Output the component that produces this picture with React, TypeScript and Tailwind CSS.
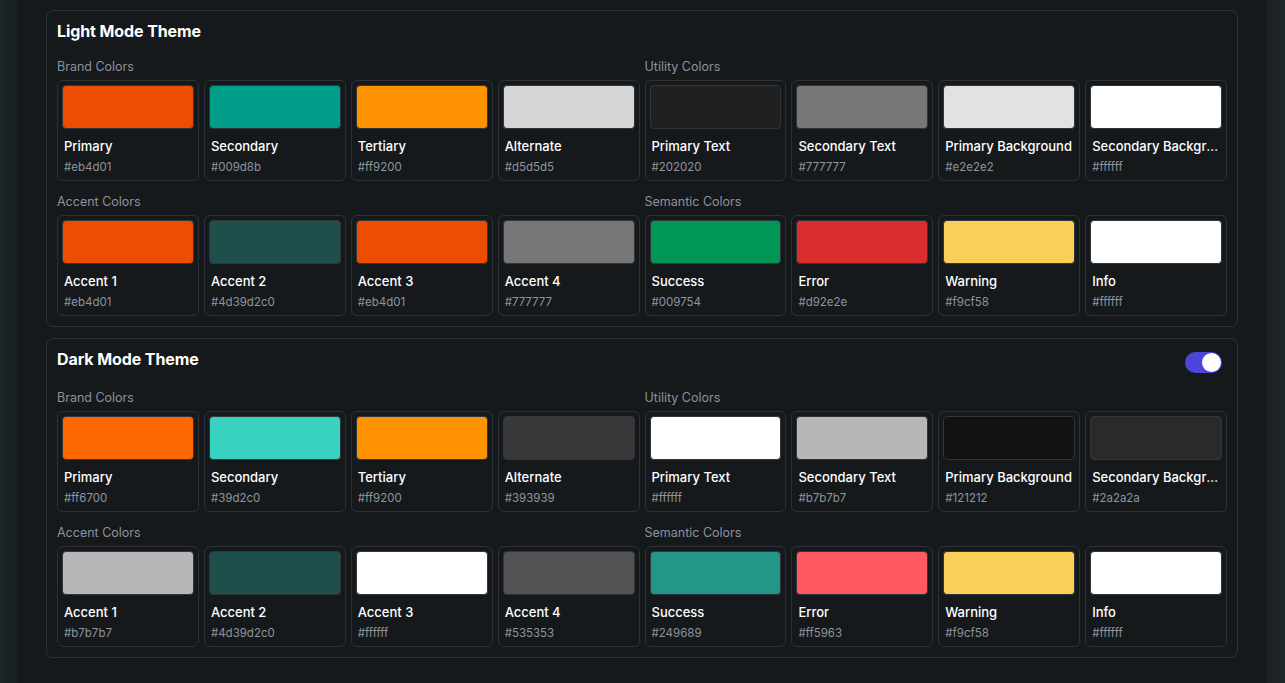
const lightTheme = {
  brand: [
    { name: "Primary", hex: "#eb4d01" },
    { name: "Secondary", hex: "#009d8b" },
    { name: "Tertiary", hex: "#ff9200" },
    { name: "Alternate", hex: "#d5d5d5" },
  ],
  utility: [
    { name: "Primary Text", hex: "#202020" },
    { name: "Secondary Text", hex: "#777777" },
    { name: "Primary Background", hex: "#e2e2e2" },
    { name: "Secondary Background", hex: "#ffffff" },
  ],
  accent: [
    { name: "Accent 1", hex: "#eb4d01" },
    { name: "Accent 2", hex: "#4d39d2c0", swatch: "#1f4f4a" },
    { name: "Accent 3", hex: "#eb4d01" },
    { name: "Accent 4", hex: "#777777" },
  ],
  semantic: [
    { name: "Success", hex: "#009754" },
    { name: "Error", hex: "#d92e2e" },
    { name: "Warning", hex: "#f9cf58" },
    { name: "Info", hex: "#ffffff" },
  ],
};

const darkTheme = {
  brand: [
    { name: "Primary", hex: "#ff6700" },
    { name: "Secondary", hex: "#39d2c0" },
    { name: "Tertiary", hex: "#ff9200" },
    { name: "Alternate", hex: "#393939" },
  ],
  utility: [
    { name: "Primary Text", hex: "#ffffff" },
    { name: "Secondary Text", hex: "#b7b7b7" },
    { name: "Primary Background", hex: "#121212" },
    { name: "Secondary Background", hex: "#2a2a2a" },
  ],
  accent: [
    { name: "Accent 1", hex: "#b7b7b7" },
    { name: "Accent 2", hex: "#4d39d2c0", swatch: "#1f4f4a" },
    { name: "Accent 3", hex: "#ffffff" },
    { name: "Accent 4", hex: "#535353" },
  ],
  semantic: [
    { name: "Success", hex: "#249689" },
    { name: "Error", hex: "#ff5963" },
    { name: "Warning", hex: "#f9cf58" },
    { name: "Info", hex: "#ffffff" },
  ],
};

type Swatch = { name: string; hex: string; swatch?: string };

function ColorCard({ color }: { color: Swatch }) {
  return (
    <div className="flex h-[101px] min-w-0 flex-col rounded-[6px] border border-[#2c3238] p-[4px]">
      <div
        className="h-[44px] w-full rounded-[4px] border border-[#30363c]"
        style={{ backgroundColor: color.swatch ?? color.hex }}
      />
      <div className="mt-[9px] truncate px-[2px] text-[13px] font-medium leading-[16px] text-white">
        {color.name}
      </div>
      <div className="mt-[6px] px-[2px] text-[11.5px] leading-[14px] text-[#8e959c]">
        {color.hex}
      </div>
    </div>
  );
}

function ColorGroup({ label, colors }: { label: string; colors: Swatch[] }) {
  return (
    <div className="min-w-0">
      <div className="h-[13px] text-[12.5px] leading-[13px] text-[#8b939b]">
        {label}
      </div>
      <div className="mt-[7px] grid grid-cols-4 gap-[5px]">
        {colors.map((c) => (
          <ColorCard key={c.name + c.hex} color={c} />
        ))}
      </div>
    </div>
  );
}

function ThemePanel({
  title,
  theme,
  toggle,
}: {
  title: string;
  theme: typeof lightTheme;
  toggle?: boolean;
}) {
  return (
    <section className="rounded-[7px] border border-[#2c3238] px-[10px] pb-[10px] pt-[10px]">
      <div className="flex items-start justify-between pr-[5px]">
        <h2 className="text-[16px] font-bold leading-[21px] tracking-[-0.1px] text-white">
          {title}
        </h2>
        {toggle && (
          <div className="mt-[3px] flex h-[21px] w-[37px] items-center justify-end rounded-full bg-[#4b45dc] p-[1px]">
            <div className="h-[19px] w-[19px] rounded-full bg-white" />
          </div>
        )}
      </div>
      <div className="mt-[18px] grid grid-cols-2 gap-x-[5px] gap-y-[14px]">
        <ColorGroup label="Brand Colors" colors={theme.brand} />
        <ColorGroup label="Utility Colors" colors={theme.utility} />
        <ColorGroup label="Accent Colors" colors={theme.accent} />
        <ColorGroup label="Semantic Colors" colors={theme.semantic} />
      </div>
    </section>
  );
}

export default function App() {
  return (
    <div
      className="flex h-[683px] w-full overflow-hidden bg-[#15191c]"
      style={{ fontFamily: "Inter, 'Noto Sans', sans-serif" }}
    >
      <div className="w-[17px] shrink-0 bg-gradient-to-r from-[#1e2629] to-[#1a2023]" />
      <main className="flex flex-1 flex-col gap-[11px] px-[29px] pt-[10px]">
        <ThemePanel title="Light Mode Theme" theme={lightTheme} />
        <ThemePanel title="Dark Mode Theme" theme={darkTheme} toggle />
      </main>
      <div className="w-[18px] shrink-0 bg-gradient-to-r from-[#1a2023] to-[#1e2629]" />
    </div>
  );
}
